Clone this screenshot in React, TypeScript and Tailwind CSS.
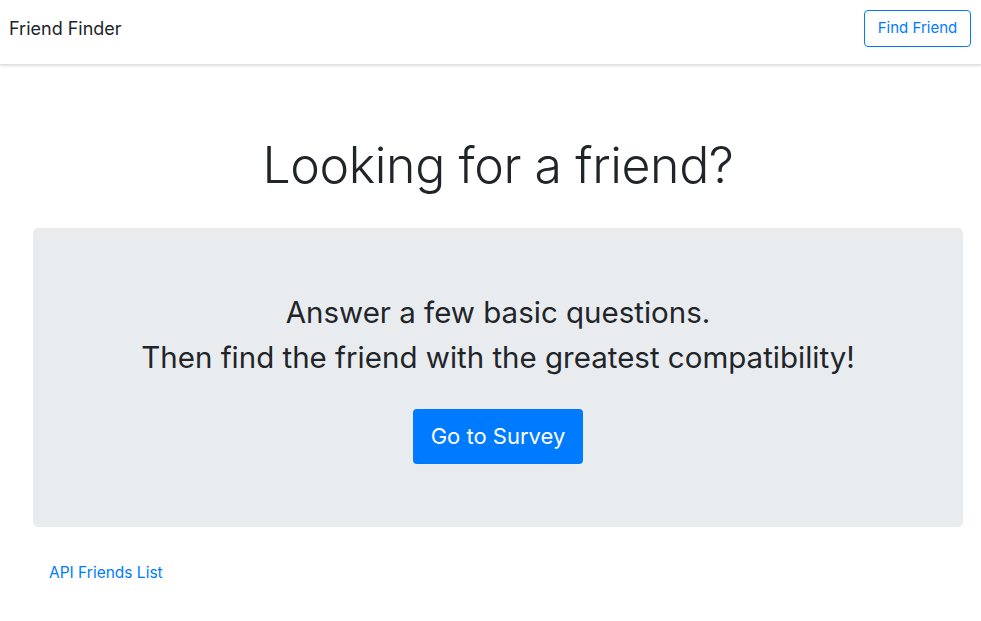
const App = () => {
  return (
    <div className="min-h-screen bg-white text-[#212529]" style={{ fontFamily: "Inter, 'Noto Sans', 'Liberation Sans', sans-serif" }}>
      <nav className="h-[65px] flex items-start justify-between pt-[10px] pl-[9px] pr-[10px] border-b border-[#dee2e6] shadow-sm">
        <span className="text-[18px] leading-[38px] text-[#212529]">Friend Finder</span>
        <button className="h-[37px] w-[107px] text-[15px] text-[#007bff] border border-[#007bff] rounded-[4px]">
          Find Friend
        </button>
      </nav>
      <div className="mx-[33px] w-[930px]">
        <h1 className="mt-[70px] text-center text-[50px] leading-[60px] font-light tracking-[-0.4px]">
          Looking for a friend?
        </h1>
        <div className="mt-[33px] h-[299px] bg-[#e9ecef] rounded-[5px] flex flex-col items-center pt-[67px]">
          <h3 className="text-[29.5px] leading-[1.2] font-normal">Answer a few basic questions.</h3>
          <h3 className="mt-[10px] text-[29.5px] leading-[1.2] font-normal">Then find the friend with the greatest compatibility!</h3>
          <button className="mt-[33px] w-[170px] h-[55px] bg-[#007bff] text-white text-[22px] rounded-[4px]">
            Go to Survey
          </button>
        </div>
      </div>
      <div className="mt-[33px] pl-[49px]">
        <a className="text-[15.5px] leading-[24px] text-[#007bff]" href="#">API Friends List</a>
      </div>
    </div>
  );
};
export default App;
